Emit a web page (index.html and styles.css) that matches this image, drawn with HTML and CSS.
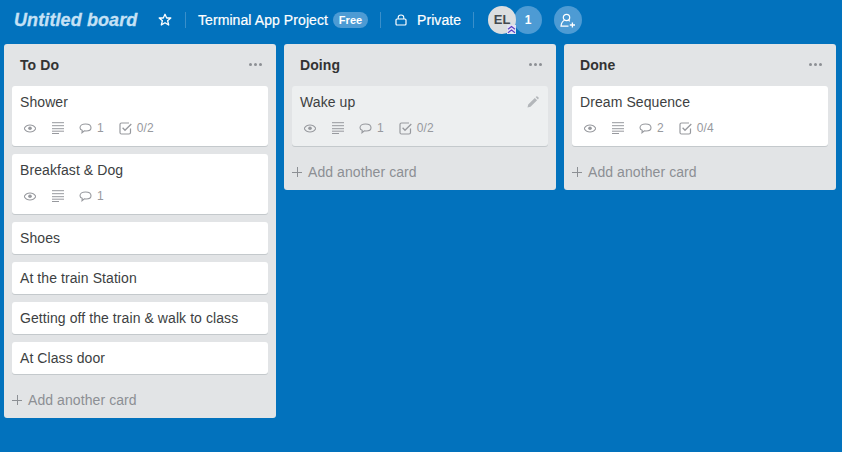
FILE: index.html
```html
<!DOCTYPE html>
<html lang="en">
<head>
	<meta charset="UTF-8">
	<title>Untitled board</title>
	<link rel="stylesheet" href="styles.css">
</head>
<body>

<svg class="defs" width="0" height="0">
	<symbol id="eye" viewBox="1 1 12 8"><path d="M1.200 5C2.700 2.400 4.700 1.500 7 1.500S11.300 2.400 12.800 5C11.300 7.600 9.300 8.500 7 8.500S2.700 7.600 1.200 5Z" fill="none" stroke="currentColor" stroke-width="1.100"/><circle cx="7" cy="4.800" r="1.800" fill="currentColor"/></symbol>
	<symbol id="desc" viewBox="0 0 12 12"><path d="M0 .7H12M0 3.700H12M0 6.700H12M0 9.200H12M0 11.500H7" fill="none" stroke="currentColor" stroke-width="1"/></symbol>
	<symbol id="comment" viewBox="0 0 13 11"><path d="M6.500 1C9.500 1 12 2.400 12 4.700C12 6.800 9.700 8 7 8C6.400 8 5.900 8 5.400 7.900L3 9.800L3.200 7.300C1.800 6.800 1 5.900 1 4.700C1 2.400 3.500 1 6.500 1Z" fill="none" stroke="currentColor" stroke-width="1.100"/></symbol>
	<symbol id="check" viewBox="0 0 13 13"><path d="M11.500 6.500V10.500Q11.500 12 10 12H2.500Q1 12 1 10.500V2.500Q1 1 2.500 1H10" fill="none" stroke="currentColor" stroke-width="1.200"/><path d="M3.600 5.800L6 8.300L12.300 2" fill="none" stroke="currentColor" stroke-width="1.300"/></symbol>
</svg>

<header class="board-header">
	<h1 class="board-title">Untitled board</h1>
	<svg class="star" width="14" height="14" viewBox="0 0 14 14"><path d="M7 1.300L8.700 5H12.800L9.600 7.700L10.700 12L7 9.700L3.300 12L4.400 7.700L1.200 5H5.300Z" fill="none" stroke="#fff" stroke-width="1.300" stroke-linejoin="round"/></svg>
	<span class="divider divider-first"></span>
	<span class="header-text">Terminal App Project</span>
	<span class="pill">Free</span>
	<span class="divider divider-mid"></span>
	<svg class="lock" width="12" height="12" viewBox="0 0 12 12"><path d="M3.200 5V3.400C3.200 2 4.300 1 6 1S8.800 2 8.800 3.400V5" fill="none" stroke="#fff" stroke-width="1.100"/><rect x="1" y="5" width="10" height="6" rx="1" fill="none" stroke="#fff" stroke-width="1.200"/></svg>
	<span class="header-text">Private</span>
	<span class="divider divider-last"></span>
	<div class="members">
		<div class="avatar">EL
			<svg class="badge" width="9" height="9" viewBox="0 0 9 9"><rect width="9" height="9" fill="#e4e4f4"/><path d="M1 4.200L4.500 1.500L8 4.200M1 7.700L4.500 5L8 7.700" fill="none" stroke="#5b3cc4" stroke-width="1.100"/></svg>
		</div>
		<div class="circle count">1</div>
	</div>
	<div class="circle invite">
		<svg width="16" height="15" viewBox="0 0 16 15"><circle cx="6.500" cy="4.500" r="3.200" fill="none" stroke="#fff" stroke-width="1.200"/><path d="M4.500 7.300C2.600 8.200 1.300 10 1 13.200H8.500M8.500 7.300L9.800 8.200" fill="none" stroke="#fff" stroke-width="1.200"/><path d="M9.800 12H15M12.400 9.400V14.600" stroke="#fff" stroke-width="1.300"/></svg>
	</div>
</header>

<main class="board">

	<section class="list">
		<div class="list-head"><h2>To Do</h2><span class="dots"><i></i><i></i><i></i></span></div>
		<div class="cards">
			<div class="card">
				<div class="card-title">Shower</div>
				<div class="meta">
					<svg class="ic-eye"><use href="#eye"/></svg>
					<svg class="ic-desc"><use href="#desc"/></svg>
					<svg class="ic-comment"><use href="#comment"/></svg><span class="num">1</span>
					<svg class="ic-check"><use href="#check"/></svg><span class="num">0/2</span>
				</div>
			</div>
			<div class="card">
				<div class="card-title">Breakfast &amp; Dog</div>
				<div class="meta">
					<svg class="ic-eye"><use href="#eye"/></svg>
					<svg class="ic-desc"><use href="#desc"/></svg>
					<svg class="ic-comment"><use href="#comment"/></svg><span class="num">1</span>
				</div>
			</div>
			<div class="card"><div class="card-title">Shoes</div></div>
			<div class="card"><div class="card-title">At the train Station</div></div>
			<div class="card"><div class="card-title">Getting off the train &amp; walk to class</div></div>
			<div class="card"><div class="card-title">At Class door</div></div>
		</div>
		<div class="add"><span class="plus"></span>Add another card</div>
	</section>

	<section class="list">
		<div class="list-head"><h2>Doing</h2><span class="dots"><i></i><i></i><i></i></span></div>
		<div class="cards">
			<div class="card card-hover">
				<div class="card-title">Wake up</div>
				<svg class="pencil" width="12" height="12" viewBox="0 0 12 12"><path d="M0.500 11.500L1.200 8.500L7.800 1.900L10.100 4.200L3.500 10.800Z M8.600 1.100L9.400 .4Q9.900 0 10.400 .4L11.600 1.600Q12 2.100 11.600 2.600L10.900 3.400Z" fill="#b3b6ba"/></svg>
				<div class="meta">
					<svg class="ic-eye"><use href="#eye"/></svg>
					<svg class="ic-desc"><use href="#desc"/></svg>
					<svg class="ic-comment"><use href="#comment"/></svg><span class="num">1</span>
					<svg class="ic-check"><use href="#check"/></svg><span class="num">0/2</span>
				</div>
			</div>
		</div>
		<div class="add"><span class="plus"></span>Add another card</div>
	</section>

	<section class="list">
		<div class="list-head"><h2>Done</h2><span class="dots"><i></i><i></i><i></i></span></div>
		<div class="cards">
			<div class="card">
				<div class="card-title">Dream Sequence</div>
				<div class="meta">
					<svg class="ic-eye"><use href="#eye"/></svg>
					<svg class="ic-desc"><use href="#desc"/></svg>
					<svg class="ic-comment"><use href="#comment"/></svg><span class="num">2</span>
					<svg class="ic-check"><use href="#check"/></svg><span class="num">0/4</span>
				</div>
			</div>
		</div>
		<div class="add"><span class="plus"></span>Add another card</div>
	</section>

</main>

</body>
</html>
```

FILE: styles.css
```css
html, body {
	height: 100%;
}

body {
	margin: 0;
	overflow: hidden;
	font-family: "Liberation Sans", Arial, sans-serif;
	font-size: 14px;
	letter-spacing: 0.08px;
	color: #3d3f42;
	background-color: #0272bd;
}

.defs {
	display: block;
	height: 0;
}

/* header */
.board-header {
	display: flex;
	align-items: center;
	height: 40px;
	padding-left: 14px;
	color: #fff;
}

.board-title {
	margin: 0 21px 0 0;
	width: 123px;
	font-size: 18px;
	font-weight: bold;
	font-style: italic;
	letter-spacing: 0.1px;
	white-space: nowrap;
	color: #c5e1f5;
	-webkit-text-stroke: 0.3px #c5e1f5;
}

.star {
	flex: none;
}

.divider {
	flex: none;
	width: 1px;
	height: 16px;
	background-color: #3a8fca;
}

.divider-first {
	margin: 0 12px 0 13px;
}

.divider-mid {
	margin: 0 14px 0 12px;
}

.divider-last {
	margin: 0 14px 0 12px;
}

.header-text {
	font-size: 14px;
	font-weight: 500;
	white-space: nowrap;
	-webkit-text-stroke: 0.2px #fff;
}

.pill {
	margin-left: 5px;
	width: 35px;
	height: 16px;
	line-height: 17px;
	border-radius: 8px;
	font-size: 11px;
	font-weight: bold;
	text-align: center;
	background-color: #4d9bd4;
}

.lock {
	margin-right: 10px;
}

.members {
	display: flex;
}

.circle {
	display: flex;
	align-items: center;
	justify-content: center;
	flex: none;
	width: 28px;
	height: 28px;
	border-radius: 50%;
	background-color: #4d9bd4;
}

.count {
	margin-left: -2px;
	font-size: 12px;
	font-weight: bold;
}

.invite {
	margin-left: 12px;
}

.avatar {
	position: relative;
	z-index: 1;
	width: 28px;
	height: 28px;
	line-height: 28px;
	border-radius: 50%;
	font-size: 13px;
	font-weight: bold;
	text-align: center;
	color: #44494f;
	background-color: #dcdee0;
}

.badge {
	position: absolute;
	right: 0;
	bottom: 0;
}

/* lists */
.board {
	display: flex;
	align-items: flex-start;
	gap: 8px;
	padding: 4px 4px 0;
}

.list {
	flex: none;
	width: 272px;
	border-radius: 3px;
	background-color: #e2e4e6;
}

.list-head {
	display: flex;
	align-items: center;
	justify-content: space-between;
	height: 42px;
	padding: 0 14px 0 16px;
}

.list-head h2 {
	margin: 0;
	font-size: 14px;
	font-weight: bold;
	color: #333;
}

.dots {
	display: flex;
	gap: 2px;
	margin-bottom: 2px;
}

.dots i {
	width: 3px;
	height: 3px;
	border-radius: 50%;
	background-color: #8c8f94;
}

.cards {
	display: flex;
	flex-direction: column;
	gap: 8px;
	padding: 0 8px;
}

.card {
	position: relative;
	padding: 7px 8px 6px;
	border-radius: 3px;
	background-color: #fff;
	box-shadow: 0 1px 0 #c4c9cc;
}

.card-hover {
	background-color: #edeff0;
}

.card-title {
	height: 19px;
	line-height: 19px;
}

.pencil {
	position: absolute;
	top: 10px;
	right: 9px;
}

.meta {
	display: flex;
	align-items: center;
	height: 20px;
	margin: 6px 0 2px;
	padding-left: 4px;
	color: #97999e;
	font-size: 12px;
}

.ic-eye {
	width: 12px;
	height: 9px;
}

.ic-desc {
	width: 12px;
	height: 12px;
	margin-left: 16px;
}

.ic-comment {
	width: 13px;
	height: 11px;
	margin-left: 15px;
}

.ic-check {
	width: 13px;
	height: 13px;
	margin-left: 15px;
}

.num {
	margin-left: 5px;
}

.add {
	display: flex;
	align-items: center;
	height: 28px;
	margin-top: 12px;
	padding: 0 0 4px 8px;
	color: #8c8f94;
}

.plus {
	width: 10px;
	height: 10px;
	margin-right: 6px;
	background: linear-gradient(#8c8f94, #8c8f94) center / 100% 1px no-repeat, linear-gradient(#8c8f94, #8c8f94) center / 1px 100% no-repeat;
}
```
